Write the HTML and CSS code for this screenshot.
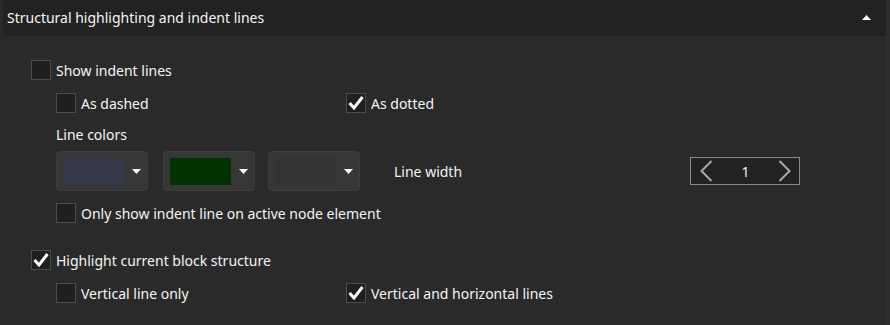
FILE: index.html
```html
<!DOCTYPE html>
<html lang="en">
<head>
    <meta charset="UTF-8">
    <title>Structural highlighting</title>
    <link rel="stylesheet" href="styles.css">
</head>
<body>

<div class="panel">
    <div class="panel-header">
        <span>Structural highlighting and indent lines</span>
        <svg class="collapse" width="9" height="5" viewBox="0 0 9 5"><polygon points="0,5 9,5 4.5,0" fill="#fff"/></svg>
    </div>

    <div class="panel-body">
        <label class="check row-top">
            <span class="box"></span>
            Show indent lines
        </label>

        <div class="sub">
            <div class="pair">
                <label class="check">
                    <span class="box"></span>
                    As dashed
                </label>
                <label class="check">
                    <span class="box checked"><svg width="20" height="20" viewBox="0 0 20 20"><polyline points="3.5,10 8,15 16.5,4" fill="none" stroke="#fff" stroke-width="3"/></svg></span>
                    As dotted
                </label>
            </div>

            <div class="caption">Line colors</div>

            <div class="colors">
                <div class="picker first">
                    <span class="swatch" style="background:#343849"></span>
                    <svg width="9" height="5" viewBox="0 0 9 5"><polygon points="0,0 9,0 4.5,5" fill="#fff"/></svg>
                </div>
                <div class="picker">
                    <span class="swatch" style="background:#003300"></span>
                    <svg width="9" height="5" viewBox="0 0 9 5"><polygon points="0,0 9,0 4.5,5" fill="#fff"/></svg>
                </div>
                <div class="picker">
                    <span class="swatch" style="background:#333333"></span>
                    <svg width="9" height="5" viewBox="0 0 9 5"><polygon points="0,0 9,0 4.5,5" fill="#fff"/></svg>
                </div>
                <span class="width-label">Line width</span>
                <div class="spinner">
                    <svg width="13" height="22" viewBox="0 0 13 22"><polyline points="11.5,1 1.5,11 11.5,21" fill="none" stroke="#aaa" stroke-width="2"/></svg>
                    <span class="value">1</span>
                    <svg width="13" height="22" viewBox="0 0 13 22"><polyline points="1.5,1 11.5,11 1.5,21" fill="none" stroke="#aaa" stroke-width="2"/></svg>
                </div>
            </div>

            <label class="check">
                <span class="box"></span>
                Only show indent line on active node element
            </label>
        </div>

        <label class="check row-block">
            <span class="box checked"><svg width="20" height="20" viewBox="0 0 20 20"><polyline points="3.5,10 8,15 16.5,4" fill="none" stroke="#fff" stroke-width="3"/></svg></span>
            Highlight current block structure
        </label>

        <div class="sub">
            <div class="pair">
                <label class="check">
                    <span class="box"></span>
                    Vertical line only
                </label>
                <label class="check">
                    <span class="box checked"><svg width="20" height="20" viewBox="0 0 20 20"><polyline points="3.5,10 8,15 16.5,4" fill="none" stroke="#fff" stroke-width="3"/></svg></span>
                    Vertical and horizontal lines
                </label>
            </div>
        </div>
    </div>
</div>

</body>
</html>
```

FILE: styles.css
```css
body {
    margin: 0;
    background: #2d2d2d;
    font-family: "Noto Sans", sans-serif;
    font-size: 14px;
    color: #f4f4f4;
}
.panel {
    width: 886px;
    background: #2a2a2a;
    height: 325px;
}
.panel-header {
    margin-left: 3px;
    height: 36px;
    background: #222222;
    display: flex;
    align-items: center;
    justify-content: space-between;
    padding: 0 15px 0 4px;
}
.panel-header span {
    margin-top: -1px;
}
.collapse {
    margin-top: -2px;
}
.panel-body {
    padding-left: 31px;
}
.check {
    display: flex;
    align-items: center;
    gap: 5px;
    height: 20px;
}
.box {
    width: 18px;
    height: 18px;
    border: 1px solid #4c4c4c;
    background: #1f1f1f;
    flex-shrink: 0;
    position: relative;
}
.box svg {
    position: absolute;
    left: -1px;
    top: -1px;
}
.row-top {
    margin-top: 24px;
}
.row-block {
    margin-top: 27px;
}
.sub {
    padding-left: 25px;
}
.pair {
    display: grid;
    grid-template-columns: 290px auto;
    margin-top: 13px;
}
.caption {
    margin-top: 12px;
    height: 20px;
    line-height: 20px;
}
.colors {
    display: flex;
    align-items: center;
    margin-top: 6px;
    margin-bottom: 12px;
}
.picker {
    width: 92px;
    height: 40px;
    border: 1px solid #3e3e3e;
    border-radius: 4px;
    background: #373737;
    display: flex;
    align-items: center;
    padding-left: 6px;
    gap: 8px;
    margin-right: 13px;
    box-sizing: border-box;
}
.picker.first {
    margin-right: 15px;
}
.swatch {
    width: 61px;
    height: 27px;
}
.width-label {
    margin-left: 21px;
    width: 296px;
}
.spinner {
    width: 110px;
    height: 28px;
    border: 1px solid #8a8a8a;
    background: #222222;
    display: flex;
    align-items: center;
    justify-content: space-between;
    padding: 0 8px 0 9px;
    box-sizing: border-box;
}
.value {
    font-size: 14px;
}
```
